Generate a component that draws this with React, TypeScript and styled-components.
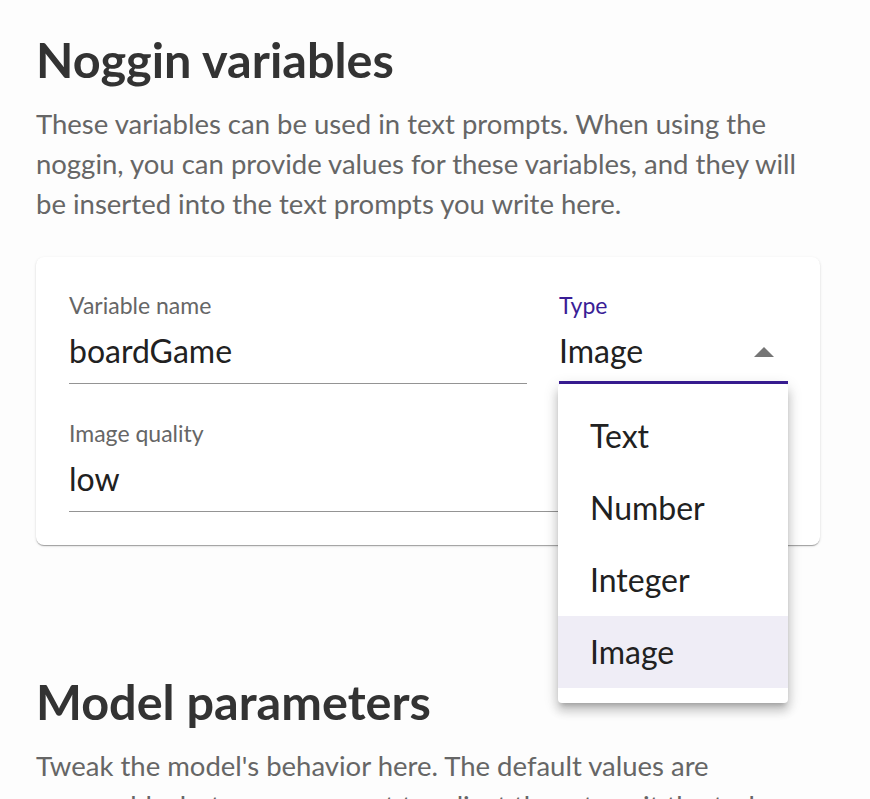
import React from 'react'
import styled, { createGlobalStyle } from 'styled-components'

const GlobalStyle = createGlobalStyle`
  html, body {
    margin: 0;
    padding: 0;
    background: #fdfdfd;
  }
  body {
    font-family: Lato, "Noto Sans", sans-serif;
    overflow: hidden;
  }
`

const purple = '#3a1d96'

const Page = styled.main`
  width: 784px;
  padding: 31px 0 0 36px;
`

const Section = styled.section<{ $gap?: number }>`
  margin-top: ${props => props.$gap ?? 0}px;
`

const Heading = styled.h2`
  margin: 0 0 17px 0;
  font-size: 48.6px;
  line-height: 56px;
  font-weight: 700;
  color: #333333;
`

const Lead = styled.p`
  margin: 0 0 33px 0;
  font-size: 27.5px;
  line-height: 40px;
  color: #666666;
`

const Card = styled.div`
  background: #ffffff;
  border-radius: 8px;
  box-shadow: 0 2px 1px -1px rgba(0, 0, 0, 0.2), 0 1px 1px 0 rgba(0, 0, 0, 0.14),
    0 1px 3px 0 rgba(0, 0, 0, 0.12);
  padding: 34px 32px 33px 33px;
`

const FieldGrid = styled.div`
  display: grid;
  grid-template-columns: 2fr 1fr;
  column-gap: 32px;
  row-gap: 35px;
`

const Field = styled.div<{ $wide?: boolean }>`
  position: relative;
  grid-column: ${props => (props.$wide ? '1 / -1' : 'auto')};
`

const FieldLabel = styled.label<{ $focused?: boolean }>`
  display: block;
  font-size: 23px;
  line-height: 28px;
  margin-bottom: 12px;
  color: ${props => (props.$focused ? purple : '#666666')};
`

const FieldValue = styled.div<{ $focused?: boolean }>`
  display: flex;
  align-items: center;
  justify-content: space-between;
  height: 40px;
  font-size: 32px;
  line-height: 40px;
  color: #212121;
  padding-bottom: ${props => (props.$focused ? 10 : 12)}px;
  border-bottom: ${props => (props.$focused ? `3px solid ${purple}` : '1px solid #949494')};
`

const ArrowIcon = styled.svg`
  width: 48px;
  height: 48px;
  margin: 0 0 -4px;
  fill: #757575;
  flex-shrink: 0;
`

const Menu = styled.ul`
  position: absolute;
  top: 100%;
  left: -1px;
  right: 0;
  margin: 0;
  padding: 16px 0 15px;
  list-style: none;
  background: #ffffff;
  border-radius: 4px;
  z-index: 10;
  box-shadow: 0 5px 5px -3px rgba(0, 0, 0, 0.2), 0 8px 10px 1px rgba(0, 0, 0, 0.14),
    0 3px 14px 2px rgba(0, 0, 0, 0.12);
`

const MenuItem = styled.li<{ $selected?: boolean }>`
  height: 72px;
  padding-left: 32px;
  font-size: 32px;
  line-height: 72px;
  color: #212121;
  background: ${props => (props.$selected ? '#efedf6' : 'transparent')};
`

const types = ['Text', 'Number', 'Integer', 'Image']

export default function App() {
  const selected = 'Image'
  return (
    <>
      <GlobalStyle />
      <Page>
        <Section>
          <Heading>Noggin variables</Heading>
          <Lead>
            These variables can be used in text prompts. When using the noggin, you can
            provide values for these variables, and they will be inserted into the text
            prompts you write here.
          </Lead>
          <Card>
            <FieldGrid>
              <Field>
                <FieldLabel>Variable name</FieldLabel>
                <FieldValue>boardGame</FieldValue>
              </Field>
              <Field>
                <FieldLabel $focused>Type</FieldLabel>
                <FieldValue $focused>
                  {selected}
                  <ArrowIcon viewBox="0 0 24 24">
                    <path d="M7 14l5-5 5 5z" />
                  </ArrowIcon>
                </FieldValue>
                <Menu>
                  {types.map(t => (
                    <MenuItem key={t} $selected={t === selected}>
                      {t}
                    </MenuItem>
                  ))}
                </Menu>
              </Field>
              <Field $wide>
                <FieldLabel>Image quality</FieldLabel>
                <FieldValue>low</FieldValue>
              </Field>
            </FieldGrid>
          </Card>
        </Section>
        <Section $gap={128}>
          <Heading>Model parameters</Heading>
          <Lead>
            Tweak the model's behavior here. The default values are reasonable, but you
            may want to adjust them to suit the task you have in mind.
          </Lead>
        </Section>
      </Page>
    </>
  )
}
